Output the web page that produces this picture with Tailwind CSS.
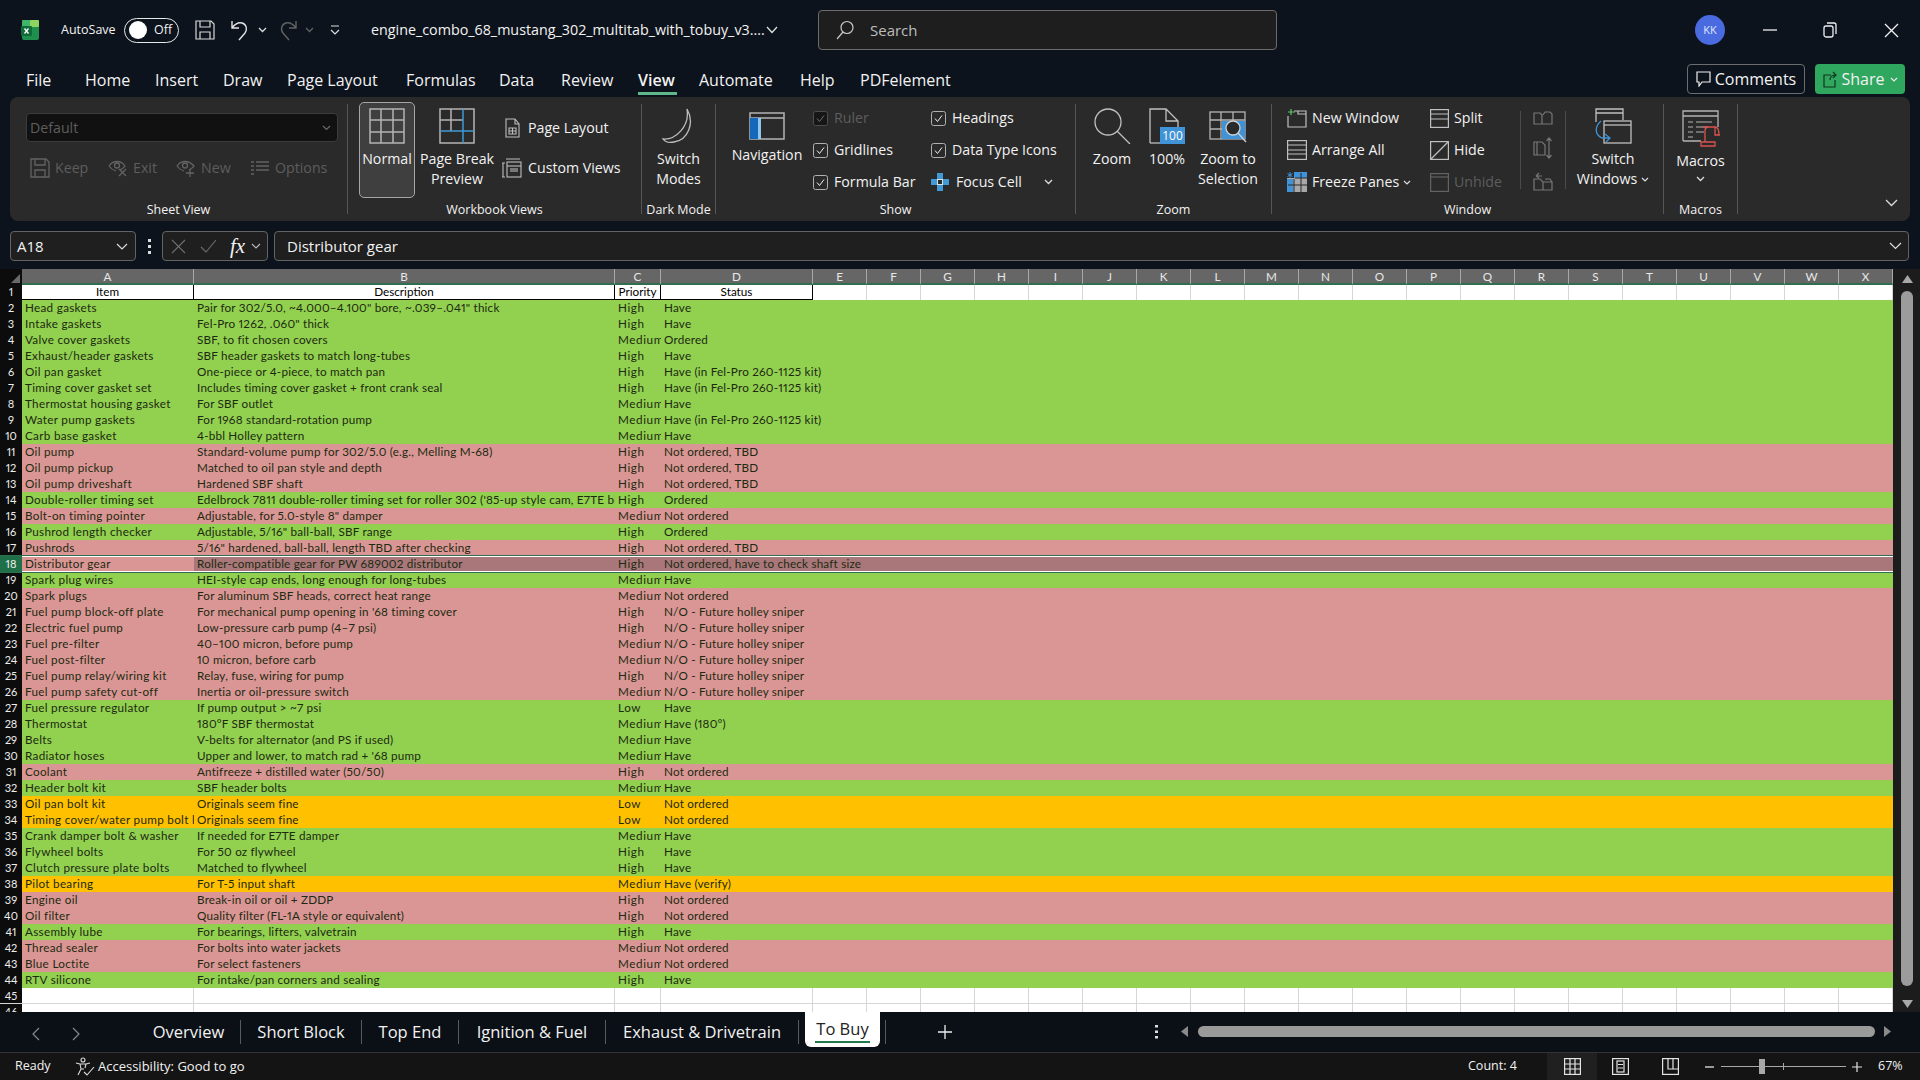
<!DOCTYPE html>
<html lang="en">
<head>
  <meta charset="UTF-8">
  <title>engine_combo_68_mustang_302_multitab_with_tobuy_v3 - Excel</title>
  <script src="https://cdn.jsdelivr.net/npm/@tailwindcss/browser@4"></script>
</head>
<body class="bg-[#0d131c] overflow-hidden">
<div class="w-[1920px] h-[1080px] flex flex-col overflow-hidden font-['Open_Sans',sans-serif] text-[#f2f2f2]">

  <!-- title bar -->
  <div class="h-[60px] flex items-center shrink-0">
    <svg class="ml-[21px] w-[19px] h-[20px]" viewBox="0 0 19 20">
      <rect x="1" y="0" width="17" height="20" rx="2" fill="#1f8f4e"/>
      <rect x="9" y="0" width="9" height="7" rx="1" fill="#8fd45e"/>
      <rect x="1" y="0" width="8" height="7" rx="1" fill="#3fb56b"/>
      <rect x="0" y="6" width="11" height="10" rx="1" fill="#0f6b38"/>
      <path d="M3.5 8.5l4 5M7.5 8.5l-4 5" stroke="#fff" stroke-width="1.3"/>
    </svg>
    <span class="ml-[21px] w-[63px] text-[12.5px] whitespace-nowrap">AutoSave</span>
    <div class="w-[55px] h-[25px] rounded-full border border-[#e8e8e8] flex items-center px-[4px]">
      <span class="w-[18px] h-[18px] rounded-full bg-white"></span>
      <span class="ml-[7px] text-[12.5px]">Off</span>
    </div>
    <svg class="ml-[16px] w-[20px] h-[20px]" viewBox="0 0 20 20" fill="none" stroke="#d8d8d8" stroke-width="1.2"><path d="M1 1h15l3 3v15H1zM5 1v6h10V1M5 19v-7h10v7"/></svg>
    <svg class="ml-[15px] w-[20px] h-[22px]" viewBox="0 0 20 22" fill="none" stroke="#e4e4e4" stroke-width="1.4"><path d="M2 2v7h7M2 9c3-4 6-6 10-5 4 1 6 6 3 10l-6 7"/></svg>
    <svg class="ml-[8px] w-[9px] h-[6px]" viewBox="0 0 9 6" fill="none" stroke="#ddd" stroke-width="1.3"><path d="M1 1l3.500 3.500L8 1"/></svg>
    <svg class="ml-[11px] w-[20px] h-[22px]" viewBox="0 0 20 22" fill="none" stroke="#626262" stroke-width="1.4"><path d="M18 2v7h-7M18 9c-3-4-6-6-10-5-4 1-6 6-3 10l6 7"/></svg>
    <svg class="ml-[7px] w-[9px] h-[6px]" viewBox="0 0 9 6" fill="none" stroke="#626262" stroke-width="1.3"><path d="M1 1l3.500 3.500L8 1"/></svg>
    <svg class="ml-[16px] w-[10px] h-[11px]" viewBox="0 0 10 11" fill="none" stroke="#ddd" stroke-width="1.2"><path d="M1 1h8M1 5l4 4 4-4"/></svg>
    <span class="ml-[31px] w-[395px] text-[14.300px] whitespace-nowrap">engine_combo_68_mustang_302_multitab_with_tobuy_v3....</span>
    <svg class="w-[12px] h-[8px]" viewBox="0 0 12 8" fill="none" stroke="#e4e4e4" stroke-width="1.2"><path d="M1 1l5 5.500L11 1"/></svg>
    <div class="ml-[40px] w-[459px] h-[40px] rounded-[4px] border border-[#6b6b6b] bg-[#1e1e1e] flex items-center">
      <svg class="ml-[16px] w-[20px] h-[20px]" viewBox="0 0 20 20" fill="none" stroke="#c8c8c8" stroke-width="1.2"><circle cx="12" cy="7.500" r="6"/><path d="M8 12l-6 7"/></svg>
      <span class="ml-[15px] text-[15px] text-[#bdbdbd]">Search</span>
    </div>
    <div class="ml-[418px] w-[30px] h-[30px] rounded-full bg-[#4a6be0] flex items-center justify-center text-[11px] text-[#dfe6ff]">KK</div>
    <svg class="ml-[38px] w-[14px] h-[2px]" viewBox="0 0 14 2"><path d="M0 1h14" stroke="#eee" stroke-width="1.3"/></svg>
    <svg class="ml-[46px] w-[14px] h-[16px]" viewBox="0 0 14 16" fill="none" stroke="#eee" stroke-width="1.3"><rect x="1" y="4" width="9" height="11" rx="2"/><path d="M4 1h7a2 2 0 0 1 2 2v9"/></svg>
    <svg class="ml-[47px] w-[15px] h-[15px]" viewBox="0 0 15 15" fill="none" stroke="#f2f2f2" stroke-width="1.3"><path d="M1 1l13 13M14 1L1 14"/></svg>
  </div>

  <!-- menu tabs -->
  <div class="h-[37px] shrink-0 flex items-center pt-[3px] text-[16px] whitespace-nowrap">
    <span class="ml-[26px] w-[59px]">File</span>
    <span class="w-[70px]">Home</span>
    <span class="w-[68px]">Insert</span>
    <span class="w-[64px]">Draw</span>
    <span class="w-[119px]">Page Layout</span>
    <span class="w-[93px]">Formulas</span>
    <span class="w-[62px]">Data</span>
    <span class="w-[77px]">Review</span>
    <span class="w-[61px] relative font-semibold">View<span class="absolute left-0 top-[24px] w-[39px] h-[3px] bg-[#5fb78c]"></span></span>
    <span class="w-[101px]">Automate</span>
    <span class="w-[60px]">Help</span>
    <span class="w-[827px]">PDFelement</span>
    <div class="w-[118px] h-[30px] -mt-[2px] rounded-[4px] border border-[#6d6d6d] flex items-center justify-center gap-[4px] text-[16px]">
      <svg class="w-[15px] h-[16px]" viewBox="0 0 15 16" fill="none" stroke="#eee" stroke-width="1.2"><path d="M1 1h13v10H6l-3 4v-4H1z"/></svg>Comments
    </div>
    <div class="ml-[10px] w-[90px] h-[30px] -mt-[2px] rounded-[4px] bg-[#2fa75f] flex items-center justify-center gap-[5px] text-[16px]">
      <svg class="w-[14px] h-[17px]" viewBox="0 0 14 17" fill="none" stroke="#10351f" stroke-width="1.2"><path d="M8 4H1v12h11V9M7 9c0-3 2-5 6-5M10 1l3 3-3 3"/></svg>Share
      <svg class="w-[8px] h-[5px]" viewBox="0 0 8 5" fill="none" stroke="#eee" stroke-width="1.2"><path d="M1 1l3 3 3-3"/></svg>
    </div>
  </div>

  <!-- ribbon -->
  <div class="ml-[10px] w-[1900px] h-[124px] shrink-0 rounded-[8px] bg-[#2a2a2a] flex pt-[7px] text-[14.200px] whitespace-nowrap">

    <!-- sheet view -->
    <div class="w-[338px] h-[110px] border-r border-[#565656] flex flex-col">
      <div class="h-[98px] shrink-0 pl-[16px] pt-[9px]">
        <div class="w-[312px] h-[29px] rounded-[4px] bg-[#111111] border border-[#3c3c3c] flex items-center justify-between pl-[3px] pr-[6px] text-[#5d5d5d]">
          Default
          <svg class="w-[9px] h-[6px]" viewBox="0 0 9 6" fill="none" stroke="#6a6a6a" stroke-width="1.2"><path d="M1 1l3.500 3.500L8 1"/></svg>
        </div>
        <div class="mt-[14px] h-[24px] flex items-center text-[#5d5d5d]">
          <svg class="ml-[4px] w-[20px] h-[20px]" viewBox="0 0 20 20" fill="none" stroke="#636363" stroke-width="1.3"><path d="M1 1h15l3 3v15H1zM5 1v6h10V1M5 19v-7h10v7"/></svg>
          <span class="ml-[5px] w-[53px]">Keep</span>
          <svg class="w-[20px] h-[18px]" viewBox="0 0 20 18" fill="none" stroke="#636363" stroke-width="1.3"><path d="M1 7c4-6 12-6 16 0-1 2-3 3-5 4M1 7c2 3 4 4 7 5"/><circle cx="9" cy="6.500" r="2.500"/><path d="M11 10l7 7M18 10l-7 7"/></svg>
          <span class="ml-[5px] w-[43px]">Exit</span>
          <svg class="w-[21px] h-[18px]" viewBox="0 0 21 18" fill="none" stroke="#636363" stroke-width="1.3"><path d="M1 7c4-6 12-6 17 0-1 2-3 3-5 4M1 7c2 3 4 4 7 5"/><circle cx="9" cy="6.500" r="2.500"/><path d="M14 10v8M10 14h8"/></svg>
          <span class="ml-[4px] w-[49px]">New</span>
          <svg class="w-[19px] h-[17px]" viewBox="0 0 19 17" fill="none" stroke="#636363" stroke-width="1.6"><path d="M1 2h3M1 6h3M1 10h3M1 14h3M6 2h13M6 6h13M6 10h13"/></svg>
          <span class="ml-[6px]">Options</span>
        </div>
      </div>
      <div class="h-[16px] shrink-0 leading-[16px] text-center text-[12.500px]">Sheet View</div>
    </div>

    <!-- workbook views -->
    <div class="w-[294px] h-[110px] border-r border-[#565656] flex flex-col">
      <div class="h-[98px] shrink-0 flex">
        <div class="ml-[11px] -mt-[2px] w-[56px] h-[96px] rounded-[5px] bg-[#3f3f3f] border border-[#a5a5a5] flex flex-col items-center pt-[5px] leading-[20px]">
          <svg class="w-[36px] h-[36px]" viewBox="0 0 36 36" fill="none" stroke="#b4b4b4" stroke-width="1.500"><rect x="1" y="1" width="34" height="34"/><path d="M12 1v34M24 1v34M1 12h34M1 24h34"/></svg>
          <span class="mt-[5px]">Normal</span>
        </div>
        <div class="ml-[5px] w-[74px] flex flex-col items-center pt-[4px] leading-[20px]">
          <svg class="w-[36px] h-[36px]" viewBox="0 0 36 36" fill="none" stroke="#b4b4b4" stroke-width="1.500"><rect x="1" y="1" width="34" height="34"/><path d="M12 1v22M1 12h23"/><path d="M24 1v34M1 23h34" stroke="#3f9ad6"/></svg>
          <span class="mt-[5px]">Page Break</span><span>Preview</span>
        </div>
        <div class="ml-[8px] pt-[12px] flex flex-col gap-[16px]">
          <div class="h-[24px] flex items-center">
            <svg class="ml-[3px] w-[15px] h-[20px]" viewBox="0 0 15 20" fill="none" stroke="#bdbdbd" stroke-width="1.100"><path d="M1 1h9l4 5v13H1zM10 1v5h4"/><path d="M4 10h7v6H4zM7.500 10v6M4 13h7"/></svg>
            <span class="ml-[8px]">Page Layout</span>
          </div>
          <div class="h-[24px] flex items-center">
            <svg class="w-[20px] h-[20px]" viewBox="0 0 20 20" fill="none" stroke="#bdbdbd" stroke-width="1.100"><path d="M4 1h14M1 5v14M0 5h3M0 19h3"/><rect x="5" y="4" width="14" height="15"/><path d="M5 8h14"/><rect x="8" y="10" width="8" height="4" fill="#777" stroke="none"/></svg>
            <span class="ml-[6px]">Custom Views</span>
          </div>
        </div>
      </div>
      <div class="h-[16px] shrink-0 leading-[16px] text-center text-[12.500px]">Workbook Views</div>
    </div>

    <!-- dark mode -->
    <div class="w-[74px] h-[110px] border-r border-[#565656] flex flex-col">
      <div class="h-[98px] shrink-0 flex flex-col items-center pt-[4px] leading-[20px]">
        <svg class="w-[36px] h-[36px]" viewBox="0 0 36 36" fill="none" stroke="#bdbdbd" stroke-width="1.300"><path d="M26 1c8 14 1 31-13 33-5 1-9 0-11-3 12 1 27-12 24-30z"/></svg>
        <span class="mt-[5px]">Switch</span><span>Modes</span>
      </div>
      <div class="h-[16px] shrink-0 leading-[16px] text-center text-[12.500px]">Dark Mode</div>
    </div>

    <!-- show -->
    <div class="w-[360px] h-[110px] border-r border-[#565656] flex flex-col">
      <div class="h-[98px] shrink-0 flex">
        <div class="ml-[13px] w-[76px] flex flex-col items-center pt-[8px] leading-[20px]">
          <svg class="w-[36px] h-[28px]" viewBox="0 0 36 28" fill="none" stroke="#b4b4b4" stroke-width="1.500"><rect x="1" y="1" width="34" height="26"/><path d="M1 6h34"/><rect x="1" y="6" width="11" height="21" fill="#1467bb" stroke="none"/><rect x="9" y="6" width="3" height="21" fill="#8fc7ee" stroke="none"/></svg>
          <span class="mt-[5px]">Navigation</span>
        </div>
        <div class="ml-[8px] w-[118px] -mt-[2px]">
          <div class="h-[32px] flex items-center text-[#5d5d5d]"><svg class="w-[15px] h-[15px]" viewBox="0 0 15 15" fill="#161616" stroke="#4d4d4d"><rect x=".5" y=".5" width="14" height="14" rx="2"/><path d="M4 7.500l2.500 3L11 4.500" fill="none" stroke="#6d6d6d"/></svg><span class="ml-[6px]">Ruler</span></div>
          <div class="h-[32px] flex items-center"><svg class="w-[15px] h-[15px]" viewBox="0 0 15 15" fill="none" stroke="#b0b0b0"><rect x=".5" y=".5" width="14" height="14" rx="2"/><path d="M4 7.500l2.500 3L11 4.500" stroke="#eee"/></svg><span class="ml-[6px]">Gridlines</span></div>
          <div class="h-[32px] flex items-center"><svg class="w-[15px] h-[15px]" viewBox="0 0 15 15" fill="none" stroke="#b0b0b0"><rect x=".5" y=".5" width="14" height="14" rx="2"/><path d="M4 7.500l2.500 3L11 4.500" stroke="#eee"/></svg><span class="ml-[6px]">Formula Bar</span></div>
        </div>
        <div class="-mt-[2px]">
          <div class="h-[32px] flex items-center"><svg class="w-[15px] h-[15px]" viewBox="0 0 15 15" fill="none" stroke="#b0b0b0"><rect x=".5" y=".5" width="14" height="14" rx="2"/><path d="M4 7.500l2.500 3L11 4.500" stroke="#eee"/></svg><span class="ml-[6px]">Headings</span></div>
          <div class="h-[32px] flex items-center"><svg class="w-[15px] h-[15px]" viewBox="0 0 15 15" fill="none" stroke="#b0b0b0"><rect x=".5" y=".5" width="14" height="14" rx="2"/><path d="M4 7.500l2.500 3L11 4.500" stroke="#eee"/></svg><span class="ml-[6px]">Data Type Icons</span></div>
          <div class="h-[32px] flex items-center">
            <svg class="w-[18px] h-[18px]" viewBox="0 0 18 18"><path d="M6 0h6v6h6v6h-6v6H6v-6H0V6h6z" fill="#3f9ad6"/><rect x="6.500" y="6.500" width="5" height="5" fill="#2a2a2a" stroke="#ddd"/></svg>
            <span class="ml-[7px]">Focus Cell</span>
            <svg class="ml-[22px] w-[9px] h-[6px]" viewBox="0 0 9 6" fill="none" stroke="#ddd" stroke-width="1.300"><path d="M1 1l3.500 3.500L8 1"/></svg>
          </div>
        </div>
      </div>
      <div class="h-[16px] shrink-0 leading-[16px] text-center text-[12.500px]">Show</div>
    </div>

    <!-- zoom -->
    <div class="w-[196px] h-[110px] border-r border-[#565656] flex flex-col">
      <div class="h-[98px] shrink-0 flex">
        <div class="ml-[8px] w-[56px] flex flex-col items-center pt-[4px] leading-[20px]">
          <svg class="w-[38px] h-[36px]" viewBox="0 0 38 36" fill="none" stroke="#c0c0c0" stroke-width="1.300"><circle cx="15" cy="14" r="13"/><path d="M24 23l13 13"/></svg>
          <span class="mt-[5px]">Zoom</span>
        </div>
        <div class="w-[54px] flex flex-col items-center pt-[4px] leading-[20px]">
          <div class="relative w-[36px] h-[36px]">
            <svg class="w-[30px] h-[36px]" viewBox="0 0 30 36" fill="none" stroke="#c0c0c0" stroke-width="1.300"><path d="M1 35V1h16l12 12v10M17 1v12h12"/><path d="M1 35h10"/></svg>
            <span class="absolute right-0 bottom-0 w-[25px] h-[17px] bg-[#3f93d6] text-white text-[12px] leading-[17px] text-center">100</span>
          </div>
          <span class="mt-[5px]">100%</span>
        </div>
        <div class="w-[68px] flex flex-col items-center pt-[4px] leading-[20px]">
          <svg class="w-[38px] h-[36px]" viewBox="0 0 38 36" fill="none" stroke="#b4b4b4" stroke-width="1.300"><rect x="1" y="4" width="35" height="27"/><path d="M12 4v27M24 4v8M1 12h35M1 21h12"/><rect x="13" y="13" width="23" height="18" fill="#3f93d6" stroke="none"/><circle cx="24" cy="20" r="7" fill="#2a2a2a" stroke="#d0d0d0"/><path d="M29 25l8 9" stroke="#d0d0d0"/></svg>
          <span class="mt-[5px]">Zoom to</span><span>Selection</span>
        </div>
      </div>
      <div class="h-[16px] shrink-0 leading-[16px] text-center text-[12.500px]">Zoom</div>
    </div>

    <!-- window -->
    <div class="w-[392px] h-[110px] border-r border-[#565656] flex flex-col">
      <div class="h-[98px] shrink-0 flex">
        <div class="ml-[15px] w-[143px] -mt-[2px]">
          <div class="h-[32px] flex items-center"><svg class="w-[20px] h-[20px]" viewBox="0 0 20 20" fill="none" stroke="#c0c0c0" stroke-width="1.200"><path d="M7 3h12v16H1V8M11 3v3h8"/><path d="M1 4h7M4 1v6" stroke="#5fc66a"/></svg><span class="ml-[5px]">New Window</span></div>
          <div class="h-[32px] flex items-center"><svg class="w-[20px] h-[20px]" viewBox="0 0 20 20" fill="none" stroke="#c0c0c0" stroke-width="1.200"><rect x=".6" y=".6" width="18.800" height="18.800"/><path d="M1 5h18M1 10h18M1 14h18"/></svg><span class="ml-[5px]">Arrange All</span></div>
          <div class="h-[32px] flex items-center"><svg class="w-[20px] h-[20px]" viewBox="0 0 20 20"><rect x="0" y="6" width="20" height="14" fill="#a8a8a8"/><path d="M7 0h13v6H7zM0 7h6v13H0z" fill="#3f93d6"/><path d="M7 7v13M14 1v19M1 13h19M8 6h12" stroke="#2a2a2a"/><path d="M3 0v6M.5 1.500l5 3M5.500 1.500l-5 3" stroke="#3f93d6"/></svg><span class="ml-[5px]">Freeze Panes</span><svg class="ml-[4px] w-[8px] h-[5px]" viewBox="0 0 8 5" fill="none" stroke="#ddd" stroke-width="1.200"><path d="M1 1l3 3 3-3"/></svg></div>
        </div>
        <div class="w-[90px] -mt-[2px]">
          <div class="h-[32px] flex items-center"><svg class="w-[19px] h-[19px]" viewBox="0 0 19 19" fill="none" stroke="#c0c0c0" stroke-width="1.200"><rect x=".6" y=".6" width="17.800" height="17.800"/><path d="M1 5h17M1 10h17" /></svg><span class="ml-[5px]">Split</span></div>
          <div class="h-[32px] flex items-center"><svg class="w-[19px] h-[19px]" viewBox="0 0 19 19" fill="none" stroke="#c0c0c0" stroke-width="1.200"><rect x=".6" y=".6" width="17.800" height="17.800"/><path d="M1 18L18 1"/></svg><span class="ml-[5px]">Hide</span></div>
          <div class="h-[32px] flex items-center text-[#5d5d5d]"><svg class="w-[19px] h-[19px]" viewBox="0 0 19 19" fill="none" stroke="#636363" stroke-width="1.200"><rect x=".6" y=".6" width="17.800" height="17.800"/><path d="M1 4h17"/></svg><span class="ml-[5px]">Unhide</span></div>
        </div>
        <div class="w-[46px] h-[78px] mt-[7px] border-x border-[#4b4b4b] flex flex-col items-center justify-between">
          <svg class="w-[20px] h-[15px] -mt-[1px]" viewBox="0 0 20 15" fill="none" stroke="#777" stroke-width="1.200"><path d="M1 3h6l2 2v9H1zM10 5l2-3h5l2 2v10H9"/></svg>
          <svg class="w-[20px] h-[22px]" viewBox="0 0 20 22" fill="none" stroke="#777" stroke-width="1.200"><path d="M1 5h8l3 3v10H1zM4 5v13M16 1v20M13.500 4L16 1l2.500 3M13.500 18l2.500 3 2.500-3"/></svg>
          <svg class="w-[20px] h-[20px] -mb-[2px]" viewBox="0 0 20 20" fill="none" stroke="#777" stroke-width="1.200"><path d="M1 8h6l3 3v8H1zM10 11h9v8h-9M13 9V8h4l2 3"/><path d="M3 5l3-3M3 5l3 2M3 5h6"/></svg>
        </div>
        <div class="w-[94px] flex flex-col items-center pt-[4px] leading-[20px]">
          <svg class="w-[38px] h-[36px]" viewBox="0 0 38 36" fill="none" stroke="#c0c0c0" stroke-width="1.300"><path d="M2 14V1h27v11M2 5h27"/><rect x="10" y="13" width="27" height="22" fill="#2a2a2a"/><path d="M10 17h27"/><path d="M7 13c-7 6-6 14 1 17h7M11 26l5 4-4 4" stroke="#3f93d6"/></svg>
          <span class="mt-[5px]">Switch</span>
          <span class="flex items-center">Windows<svg class="ml-[4px] w-[8px] h-[5px]" viewBox="0 0 8 5" fill="none" stroke="#ddd" stroke-width="1.200"><path d="M1 1l3 3 3-3"/></svg></span>
        </div>
      </div>
      <div class="h-[16px] shrink-0 leading-[16px] text-center text-[12.500px]">Window</div>
    </div>

    <!-- macros -->
    <div class="w-[74px] h-[110px] border-r border-[#565656] flex flex-col">
      <div class="h-[98px] shrink-0 flex flex-col items-center pt-[6px]">
        <svg class="w-[38px] h-[37px]" viewBox="0 0 38 37" fill="none" stroke="#b4b4b4" stroke-width="1.300"><path d="M1 31V1h35v16M1 6h35M1 31h18"/><path d="M6 12h5M14 12h16M6 17h5M14 17h12M6 22h5M14 22h8M6 27h5" stroke-width="1"/><path d="M21 17h12v8h5M27 17c-3 0-4 2-4 4v11M33 17c3 0 4 3 4 8M19 32h14v4H19z" stroke="#d9534f"/></svg>
        <span class="mt-[4px] leading-[20px]">Macros</span>
        <svg class="mt-[5px] w-[9px] h-[6px]" viewBox="0 0 9 6" fill="none" stroke="#ddd" stroke-width="1.300"><path d="M1 1l3.500 3.500L8 1"/></svg>
      </div>
      <div class="h-[16px] shrink-0 leading-[16px] text-center text-[12.500px]">Macros</div>
    </div>

    <div class="flex-1 h-[103px] flex justify-end items-end pr-[12px]">
      <svg class="w-[13px] h-[8px]" viewBox="0 0 13 8" fill="none" stroke="#ddd" stroke-width="1.300"><path d="M1 1l5.500 5.500L12 1"/></svg>
    </div>
  </div>

  <!-- formula bar -->
  <div class="mt-[10px] h-[30px] shrink-0 flex items-stretch text-[15px]">
    <div class="ml-[10px] w-[126px] rounded-[4px] border border-[#636363] bg-[#1f1f1f] flex items-center justify-between pl-[6px] pr-[7px]">
      A18
      <svg class="w-[12px] h-[7px]" viewBox="0 0 12 7" fill="none" stroke="#ddd" stroke-width="1.200"><path d="M1 1l5 5 5-5"/></svg>
    </div>
    <div class="w-[26px] flex items-center justify-center">
      <svg class="w-[3px] h-[15px]" viewBox="0 0 3 15" fill="#ddd"><rect width="3" height="3"/><rect y="6" width="3" height="3"/><rect y="12" width="3" height="3"/></svg>
    </div>
    <div class="w-[106px] rounded-[4px] border border-[#636363] bg-[#1f1f1f] flex items-center">
      <svg class="ml-[8px] w-[15px] h-[15px]" viewBox="0 0 15 15" fill="none" stroke="#6e6e6e" stroke-width="1.100"><path d="M1 1l13 13M14 1L1 14"/></svg>
      <svg class="ml-[14px] w-[17px] h-[14px]" viewBox="0 0 17 14" fill="none" stroke="#6e6e6e" stroke-width="1.100"><path d="M1 8l5 5L16 1"/></svg>
      <span class="ml-[13px] font-['Liberation_Serif',serif] italic text-[21px] leading-none">fx</span>
      <svg class="ml-[6px] w-[10px] h-[6px]" viewBox="0 0 10 6" fill="none" stroke="#bbb" stroke-width="1.100"><path d="M1 1l4 4 4-4"/></svg>
    </div>
    <div class="ml-[6px] w-[1635px] rounded-[4px] border border-[#636363] bg-[#1f1f1f] flex items-center justify-between pl-[12px] pr-[6px]">
      Distributor gear
      <svg class="w-[13px] h-[8px]" viewBox="0 0 13 8" fill="none" stroke="#ddd" stroke-width="1.200"><path d="M1 1l5.500 5.500L12 1"/></svg>
    </div>
  </div>

  <!-- sheet -->
  <div class="mt-[8px] h-[743px] shrink-0 flex overflow-hidden">
    <div id="sheet" class="w-[1893px] bg-white font-['Lato',sans-serif] text-[11.700px] proportional-nums leading-[15px] text-black overflow-hidden"></div>
    <div class="flex-1 bg-[#1c1c1c] flex flex-col items-center pl-[1px] pt-[6px]">
      <svg class="w-[11px] h-[8px]" viewBox="0 0 11 8"><path d="M5.500 0L11 8H0z" fill="#a8a8a8"/></svg>
      <div class="mt-[8px] w-[12px] h-[695px] rounded-full bg-[#9c9c9c]"></div>
      <svg class="mt-[14px] w-[11px] h-[8px]" viewBox="0 0 11 8"><path d="M5.500 8L11 0H0z" fill="#a8a8a8"/></svg>
    </div>
  </div>

  <!-- sheet tabs -->
  <div class="h-[40px] shrink-0 bg-[#0b0f16] flex text-[16.500px] whitespace-nowrap">
    <svg class="ml-[32px] mt-[15px] w-[8px] h-[14px]" viewBox="0 0 8 14" fill="none" stroke="#8a8a8a" stroke-width="1.200"><path d="M7 1L1 7l6 6"/></svg>
    <svg class="ml-[32px] mt-[15px] w-[8px] h-[14px]" viewBox="0 0 8 14" fill="none" stroke="#8a8a8a" stroke-width="1.200"><path d="M1 1l6 6-6 6"/></svg>
    <div class="ml-[57px] w-[104px] h-[24px] mt-[8px] border-r border-[#5a5a5a] flex items-center justify-center">Overview</div>
    <div class="w-[121px] h-[24px] mt-[8px] border-r border-[#5a5a5a] flex items-center justify-center">Short Block</div>
    <div class="w-[97px] h-[24px] mt-[8px] border-r border-[#5a5a5a] flex items-center justify-center">Top End</div>
    <div class="w-[147px] h-[24px] mt-[8px] border-r border-[#5a5a5a] flex items-center justify-center">Ignition &amp; Fuel</div>
    <div class="w-[193px] h-[24px] mt-[8px] border-r border-[#5a5a5a] flex items-center justify-center">Exhaust &amp; Drivetrain</div>
    <div class="ml-[6px] w-[75px] h-[35px] rounded-b-[6px] bg-white text-[#222222] flex flex-col items-center">
      <span class="mt-[5px] leading-[24px]">To Buy</span>
      <span class="w-[55px] h-[2px] bg-[#1f7a4c]"></span>
    </div>
    <div class="ml-[5px] w-[1px] h-[24px] mt-[8px] bg-[#5a5a5a]"></div>
    <svg class="ml-[52px] mt-[13px] w-[14px] h-[14px]" viewBox="0 0 14 14" stroke="#eee" stroke-width="1.300"><path d="M7 0v14M0 7h14"/></svg>
    <svg class="ml-[203px] mt-[13px] w-[3px] h-[14px]" viewBox="0 0 3 14" fill="#ddd"><rect width="3" height="2.500"/><rect y="5.500" width="3" height="2.500"/><rect y="11" width="3" height="2.500"/></svg>
    <svg class="ml-[23px] mt-[14px] w-[7px] h-[11px]" viewBox="0 0 7 11"><path d="M0 5.500L7 0v11z" fill="#8a8a8a"/></svg>
    <div class="ml-[10px] mt-[14px] w-[677px] h-[11px] rounded-full bg-[#9a9a9a]"></div>
    <svg class="ml-[9px] mt-[14px] w-[7px] h-[11px]" viewBox="0 0 7 11"><path d="M7 5.500L0 0v11z" fill="#8a8a8a"/></svg>
  </div>

  <!-- status bar -->
  <div class="h-[28px] shrink-0 bg-[#141414] border-t border-[#333333] flex items-center text-[12.500px] whitespace-nowrap">
    <span class="ml-[15px] w-[60px]">Ready</span>
    <svg class="w-[20px] h-[20px]" viewBox="0 0 20 20" fill="none" stroke="#ddd" stroke-width="1.100"><circle cx="8" cy="3" r="2"/><path d="M1 6l4 1h6l4-1M5 7l1 5-3 6M11 7l-1 4M6 12h3"/><path d="M9 15l3 3 7-8"/></svg>
    <span class="ml-[3px] w-[1370px] text-[13px]">Accessibility: Good to go</span>
    <span class="w-[79px]">Count: 4</span>
    <div class="w-[50px] h-[27px] bg-[#202020] flex items-center justify-center">
      <svg class="w-[17px] h-[17px]" viewBox="0 0 17 17" fill="none" stroke="#e4e4e4" stroke-width="1.200"><rect x=".6" y=".6" width="15.800" height="15.800"/><path d="M6 1v15M11 1v15M1 6h15M1 11h15"/></svg>
    </div>
    <svg class="ml-[15px] w-[17px] h-[17px]" viewBox="0 0 17 17" fill="none" stroke="#e4e4e4" stroke-width="1.200"><rect x=".6" y=".6" width="15.800" height="15.800"/><rect x="5" y="3" width="7" height="11"/><path d="M6 6.500h5M6 10h5"/></svg>
    <svg class="ml-[33px] w-[17px] h-[17px]" viewBox="0 0 17 17" fill="none" stroke="#e4e4e4" stroke-width="1.200"><rect x=".6" y=".6" width="15.800" height="15.800"/><path d="M6 1v10h10M11 1v10"/></svg>
    <svg class="ml-[26px] w-[9px] h-[2px]" viewBox="0 0 9 2"><path d="M0 1h9" stroke="#e4e4e4" stroke-width="1.300"/></svg>
    <div class="ml-[7px] w-[125px] h-[1px] bg-[#a8a8a8] relative">
      <span class="absolute left-[38px] -top-[7px] w-[6px] h-[15px] bg-[#a8a8a8]"></span>
      <span class="absolute left-[62px] -top-[3px] w-[1px] h-[7px] bg-[#a8a8a8]"></span>
    </div>
    <svg class="ml-[6px] w-[10px] h-[10px]" viewBox="0 0 10 10" stroke="#e4e4e4" stroke-width="1.200"><path d="M5 0v10M0 5h10"/></svg>
    <span class="ml-[16px]">67%</span>
  </div>
</div>

<script>
  const G = 'bg-[#92d050]', R = 'bg-[#da9694]', O = 'bg-[#ffc000]'
  const LETTERS = 'EFGHIJKLMNOPQRSTUVWX'.split('')
  const FEL = 'Have (in Fel-Pro 260-1125 kit)'
  const NOT = 'Not ordered', TBD = 'Not ordered, TBD', SNIPER = 'N/O - Future holley sniper'
  const rows = [
    ['Head gaskets', 'Pair for 302/5.0, ~4.000–4.100" bore, ~.039–.041" thick', 'High', 'Have', G],
    ['Intake gaskets', 'Fel-Pro 1262, .060" thick', 'High', 'Have', G],
    ['Valve cover gaskets', 'SBF, to fit chosen covers', 'Medium', 'Ordered', G],
    ['Exhaust/header gaskets', 'SBF header gaskets to match long-tubes', 'High', 'Have', G],
    ['Oil pan gasket', 'One-piece or 4-piece, to match pan', 'High', FEL, G],
    ['Timing cover gasket set', 'Includes timing cover gasket + front crank seal', 'High', FEL, G],
    ['Thermostat housing gasket', 'For SBF outlet', 'Medium', 'Have', G],
    ['Water pump gaskets', 'For 1968 standard-rotation pump', 'Medium', FEL, G],
    ['Carb base gasket', '4-bbl Holley pattern', 'Medium', 'Have', G],
    ['Oil pump', 'Standard-volume pump for 302/5.0 (e.g., Melling M-68)', 'High', TBD, R],
    ['Oil pump pickup', 'Matched to oil pan style and depth', 'High', TBD, R],
    ['Oil pump driveshaft', 'Hardened SBF shaft', 'High', TBD, R],
    ['Double-roller timing set', "Edelbrock 7811 double-roller timing set for roller 302 ('85-up style cam, E7TE block)", 'High', 'Ordered', G],
    ['Bolt-on timing pointer', 'Adjustable, for 5.0-style 8" damper', 'Medium', NOT, R],
    ['Pushrod length checker', 'Adjustable, 5/16" ball-ball, SBF range', 'High', 'Ordered', G],
    ['Pushrods', '5/16" hardened, ball-ball, length TBD after checking', 'High', TBD, R],
    ['Distributor gear', 'Roller-compatible gear for PW 689002 distributor', 'High', 'Not ordered, have to check shaft size', 'sel'],
    ['Spark plug wires', 'HEI-style cap ends, long enough for long-tubes', 'Medium', 'Have', G],
    ['Spark plugs', 'For aluminum SBF heads, correct heat range', 'Medium', NOT, R],
    ['Fuel pump block-off plate', "For mechanical pump opening in '68 timing cover", 'High', SNIPER, R],
    ['Electric fuel pump', 'Low-pressure carb pump (4–7 psi)', 'High', SNIPER, R],
    ['Fuel pre-filter', '40–100 micron, before pump', 'Medium', SNIPER, R],
    ['Fuel post-filter', '10 micron, before carb', 'Medium', SNIPER, R],
    ['Fuel pump relay/wiring kit', 'Relay, fuse, wiring for pump', 'High', SNIPER, R],
    ['Fuel pump safety cut-off', 'Inertia or oil-pressure switch', 'Medium', SNIPER, R],
    ['Fuel pressure regulator', 'If pump output > ~7 psi', 'Low', 'Have', G],
    ['Thermostat', '180°F SBF thermostat', 'Medium', 'Have (180°)', G],
    ['Belts', 'V-belts for alternator (and PS if used)', 'Medium', 'Have', G],
    ['Radiator hoses', "Upper and lower, to match rad + '68 pump", 'Medium', 'Have', G],
    ['Coolant', 'Antifreeze + distilled water (50/50)', 'High', NOT, R],
    ['Header bolt kit', 'SBF header bolts', 'Medium', 'Have', G],
    ['Oil pan bolt kit', 'Originals seem fine', 'Low', NOT, O],
    ['Timing cover/water pump bolt kit', 'Originals seem fine', 'Low', NOT, O],
    ['Crank damper bolt & washer', 'If needed for E7TE damper', 'Medium', 'Have', G],
    ['Flywheel bolts', 'For 50 oz flywheel', 'High', 'Have', G],
    ['Clutch pressure plate bolts', 'Matched to flywheel', 'High', 'Have', G],
    ['Pilot bearing', 'For T-5 input shaft', 'Medium', 'Have (verify)', O],
    ['Engine oil', 'Break-in oil or oil + ZDDP', 'High', NOT, R],
    ['Oil filter', 'Quality filter (FL-1A style or equivalent)', 'High', NOT, R],
    ['Assembly lube', 'For bearings, lifters, valvetrain', 'High', 'Have', G],
    ['Thread sealer', 'For bolts into water jackets', 'Medium', NOT, R],
    ['Blue Loctite', 'For select fasteners', 'Medium', NOT, R],
    ['RTV silicone', 'For intake/pan corners and sealing', 'High', 'Have', G],
  ]

  const esc = s => s.replace(/&/g, '&amp;').replace(/</g, '&lt;').replace(/>/g, '&gt;')
  const rowHead = (n, extra) => `<div class="w-[22px] shrink-0 bg-[#0c0c0c] text-[#eeeeee] text-center text-[11px] ${extra || ''}">${n}</div>`
  const blanks = LETTERS.map(() => '<div class="w-[54px] shrink-0 border-r border-[#d6d6d6]"></div>').join('')

  let html = `<div class="flex h-[16px]">
    <div class="w-[22px] shrink-0 bg-[#0c0c0c] flex items-end justify-end pr-[2px] pb-[2px]"><svg class="w-[9px] h-[9px]" viewBox="0 0 9 9"><path d="M9 0v9H0z" fill="#6a6a6a"/></svg></div>
    ${['A|172', 'B|421', 'C|46', 'D|152'].map(c => {
      const [l, w] = c.split('|')
      return `<div class="shrink-0 bg-[#666666] border-r border-[#a8a8a8] border-b-2 border-b-[#2f6f50] text-[#e8e8e8] text-center leading-[14px]" style="width:${w}px">${l}</div>`
    }).join('')}
    ${LETTERS.map(l => `<div class="w-[54px] shrink-0 bg-[#666666] border-r border-[#a8a8a8] border-b-2 border-b-[#2f6f50] text-[#e8e8e8] text-center leading-[14px]">${l}</div>`).join('')}
  </div>
  <div class="flex h-[15px] leading-[13px]">
    ${rowHead(1)}
    <div class="w-[172px] shrink-0 border-r border-b border-black text-center">Item</div>
    <div class="w-[421px] shrink-0 border-r border-b border-black text-center">Description</div>
    <div class="w-[46px] shrink-0 border-r border-b border-black text-center overflow-hidden">Priority</div>
    <div class="w-[152px] shrink-0 border-r border-b border-black text-center">Status</div>
    ${blanks}
  </div>`

  rows.forEach((r, i) => {
    const n = i + 2
    const sel = r[4] === 'sel'
    html += `<div class="flex h-[16px] relative ${sel ? 'z-10 bg-[#a97779] border-y border-white shadow-[0_-1px_0_#2f6f50,0_1px_0_#2f6f50] leading-[13px]' : r[4]}">
      ${rowHead(n, sel ? 'bg-[#1f6f48] -my-[1px] leading-[15px]' : '')}
      <div class="w-[172px] shrink-0 pl-[3px] overflow-hidden whitespace-nowrap tracking-[0.3px] text-[#1c2a12] ${sel ? 'bg-[#da9694]' : ''}">${esc(r[0])}</div>
      <div class="w-[421px] shrink-0 pl-[3px] overflow-hidden whitespace-nowrap tracking-[0.2px] text-[#1c2a12]">${esc(r[1])}</div>
      <div class="w-[46px] shrink-0 pl-[3px] overflow-hidden whitespace-nowrap tracking-[0.6px] text-[#1c2a12]">${r[2]}</div>
      <div class="w-[152px] shrink-0 pl-[3px] whitespace-nowrap tracking-[0.2px] text-[#1c2a12]">${esc(r[3])}</div>
    </div>`
  })

  for (const n of [45, 46]) {
    html += `<div class="flex h-[16px] border-b border-[#d6d6d6]">
      ${rowHead(n)}
      <div class="w-[172px] shrink-0 border-r border-[#d6d6d6]"></div>
      <div class="w-[421px] shrink-0 border-r border-[#d6d6d6]"></div>
      <div class="w-[46px] shrink-0 border-r border-[#d6d6d6]"></div>
      <div class="w-[152px] shrink-0 border-r border-[#d6d6d6]"></div>
      ${blanks}
    </div>`
  }
  document.getElementById('sheet').innerHTML = html
</script>
</body>
</html>
